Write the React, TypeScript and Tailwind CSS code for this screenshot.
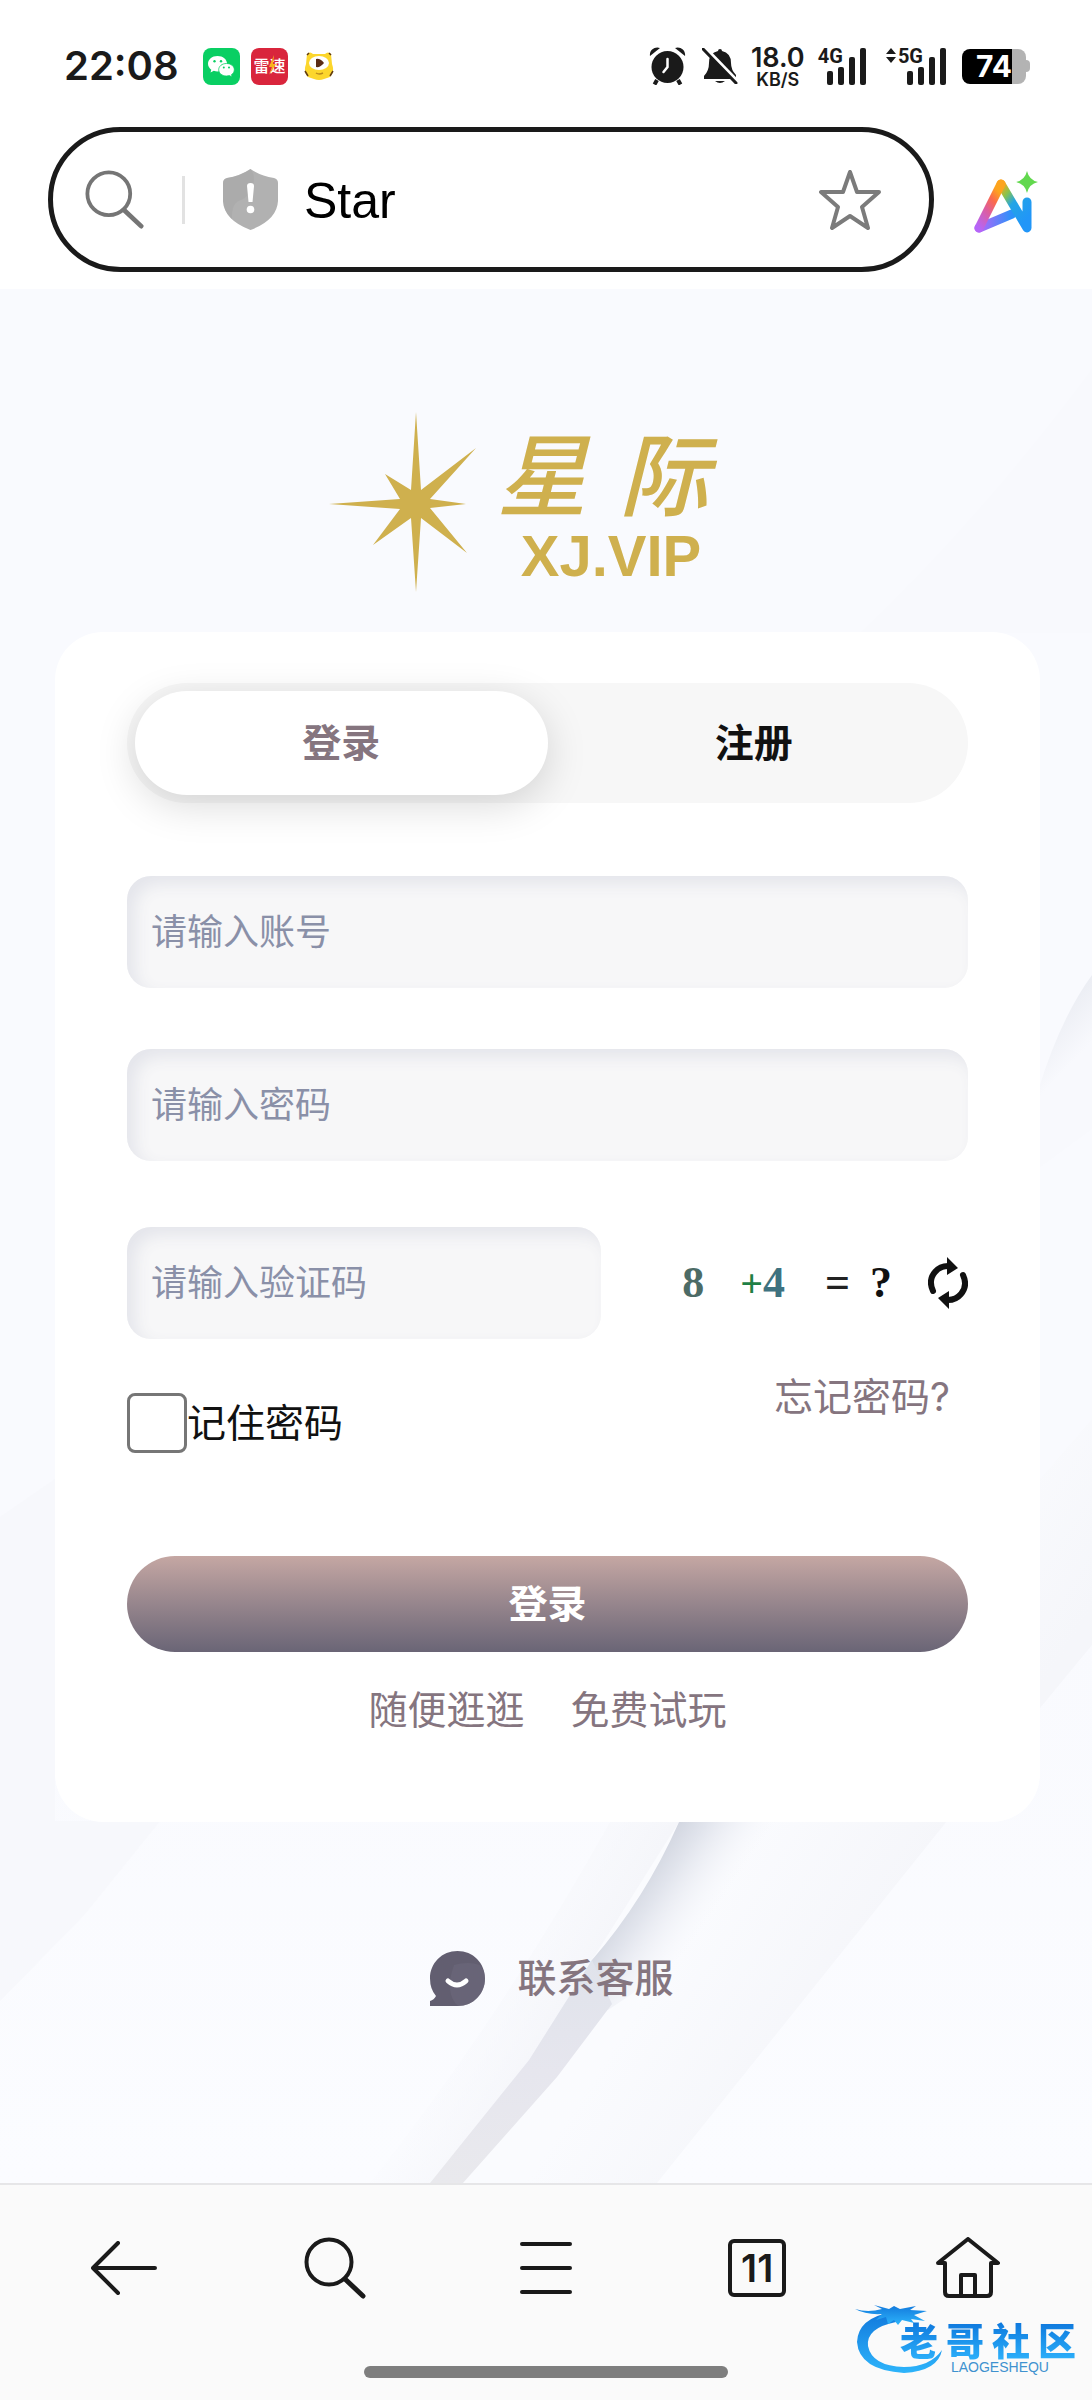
import { useState } from "react";

const GOLD = "#cfb04e";

const navItems = [
  { label: "后退", icon: <BackIcon /> },
  { label: "搜索", icon: <SearchIcon stroke="#1a1a1a" className="size-[62px]" /> },
  { label: "菜单", icon: <MenuIcon /> },
  { label: "标签页", icon: <TabsIcon count={11} /> },
  { label: "主页", icon: <HomeIcon /> },
];

const inputClass =
  "block h-28 w-full rounded-3xl bg-[#f7f7f8] px-6 text-[36px] text-[#1a1a1a] outline-none placeholder:text-[#8a90a8] shadow-[inset_8px_8px_16px_#e4e5eb]";

function SearchIcon({ stroke, className }: { stroke: string; className: string }) {
  return (
    <svg viewBox="0 0 62 62" className={className} fill="none" stroke={stroke} strokeWidth="4" strokeLinecap="round">
      <circle cx="25" cy="25" r="22.5" />
      <path d="M41 42 59 59" strokeWidth="5" />
    </svg>
  );
}

function BackIcon() {
  return (
    <svg viewBox="0 0 66 54" className="h-[54px] w-[66px]" fill="none" stroke="#1a1a1a" strokeWidth="4" strokeLinecap="round" strokeLinejoin="round">
      <path d="M27 2 2 27 27 52M2 27H64" />
    </svg>
  );
}

function MenuIcon() {
  return (
    <svg viewBox="0 0 52 52" className="size-[52px]" stroke="#1a1a1a" strokeWidth="4" strokeLinecap="round">
      <path d="M2 2H50M2 26H50M2 50H50" />
    </svg>
  );
}

function TabsIcon({ count }: { count: number }) {
  return (
    <span className="flex size-[58px] items-center justify-center rounded-md border-4 border-[#1a1a1a] text-[38px] leading-none font-semibold text-[#1a1a1a]">
      {count}
    </span>
  );
}

function HomeIcon() {
  return (
    <svg viewBox="0 0 66 62" className="h-[62px] w-[66px]" fill="none" stroke="#1a1a1a" strokeWidth="4" strokeLinejoin="round">
      <path d="M10 26H3L33 2 63 26H56V55Q56 59 52 59H14Q10 59 10 55Z" />
      <path d="M26 59V38H40V59" />
    </svg>
  );
}

function SignalBars() {
  return (
    <svg viewBox="0 0 39 37" className="-ml-4 h-[37px] w-[39px]" fill="#1a1a1a">
      <rect x="0" y="23" width="6" height="14" rx="2" />
      <rect x="11" y="19" width="6" height="18" rx="2" />
      <rect x="22" y="9" width="6" height="28" rx="2" />
      <rect x="33" y="0" width="6" height="37" rx="2" />
    </svg>
  );
}

function StatusBar() {
  return (
    <div className="flex h-[132px] items-center justify-between pr-[62px] pl-16 text-[#1a1a1a]">
      <div className="flex items-center">
        <span className="w-[139px] text-[40px] leading-none font-semibold">22:08</span>
        <svg viewBox="0 0 37 37" className="mr-[11px] size-[37px]">
          <rect width="37" height="37" rx="8" fill="#09cf63" />
          <path d="M14.500 8C9 8 5 11.500 5 15.800c0 2.500 1.300 4.500 3.300 5.900L7.500 24.500l3.300-1.700c1.200.4 2.400.6 3.700.6 5.500 0 9.500-3.300 9.500-7.700S20 8 14.500 8Z" fill="#fff" />
          <path d="M23.500 15.500c-4.600 0-7.800 2.800-7.800 6.200s3.200 6.300 7.800 6.300c1 0 2-.2 2.900-.4l2.700 1.400-.6-2.400c1.800-1.200 2.800-2.900 2.800-4.900 0-3.400-3.200-6.200-7.800-6.200Z" fill="#fff" stroke="#09cf63" strokeWidth=".8" />
          <g fill="#09cf63">
            <circle cx="11.500" cy="13.300" r="1.200" />
            <circle cx="18" cy="13.300" r="1.200" />
            <circle cx="20.800" cy="19.500" r="1" />
            <circle cx="26" cy="19.500" r="1" />
          </g>
        </svg>
        <div className="relative mr-4 flex size-[37px] items-center justify-center rounded-lg bg-[#d9253c] text-[16px] leading-none font-medium text-white">
          雷速
          <svg viewBox="0 0 37 37" className="absolute inset-0 size-[37px]">
            <path d="M23 7 18 19h3l-3 8 7-11h-3l1-9Z" fill="#f9b21c" />
          </svg>
        </div>
        <svg viewBox="0 0 30 28" className="h-7 w-[30px]">
          <path d="M3 2Q6-1 9 2H21Q24-1 27 2L28 12Q31 20 26 25L20 27Q15 29 10 27L4 25Q-1 20 2 12Z" fill="#fcd62c" />
          <path d="M1 19 4 24M29 19 26 24M3 3 5 1M27 3 25 1" stroke="#5f3a12" strokeWidth="1.500" />
          <ellipse cx="15" cy="11" rx="10" ry="7" fill="#fff" />
          <path d="M12 7Q16 6 20 11 16 16 12 15Z" fill="#5b2c16" />
          <path d="M12 21Q15 23 19 21" stroke="#b98a1c" strokeWidth="1.500" fill="none" />
        </svg>
      </div>

      <div className="flex items-center">
        <svg viewBox="0 0 37 38" className="mr-4 h-[38px] w-[37px]" fill="#1a1a1a">
          <path d="M1 9C0 3 6-1 11 1ZM36 9C37 3 31-1 26 1Z" />
          <circle cx="18.500" cy="20" r="16" />
          <path d="M8 33 5.500 37.500M29 33 31.500 37.500" stroke="#1a1a1a" strokeWidth="4" />
          <path d="M18.500 12V20L14.500 25" fill="none" stroke="#fff" strokeWidth="2.500" strokeLinecap="round" />
        </svg>
        <svg viewBox="0 0 36 36" className="mr-3 size-9" fill="#1a1a1a">
          <path d="M18 1q2 0 2 2 9 2 9 12 0 7 5 12v4H2v-3q5-5 5-13Q7 5 16 3q0-2 2-2ZM13 33H23Q18 37 13 33Z" />
          <path d="M3 0 36 34" stroke="#fff" strokeWidth="4" />
          <path d="M1 1 34 35" stroke="#1a1a1a" strokeWidth="3" strokeLinecap="round" />
        </svg>
        <div className="mr-3 flex w-14 flex-col items-center font-semibold">
          <span className="text-[27px] leading-[27px]">18.0</span>
          <span className="text-[18px] leading-[18px]">KB/S</span>
        </div>
        <div className="mr-5 flex items-start">
          <span className="font-[Roboto] text-[20px] leading-4 font-bold">4G</span>
          <SignalBars />
        </div>
        <div className="mr-4 flex items-start">
          <svg viewBox="0 0 10 15" className="mr-0.5 h-[15px] w-[10px]" fill="#1a1a1a">
            <path d="M5 0 10 6H0ZM5 15 0 9H10Z" />
          </svg>
          <span className="font-[Roboto] text-[20px] leading-4 font-bold">5G</span>
          <SignalBars />
        </div>
        <div className="flex items-center">
          <div className="flex h-[35px] w-16 items-center justify-end rounded-lg bg-linear-to-r from-black from-78% to-[#b3b3b3] to-78% pr-[14px] text-[30px] leading-none font-bold text-white">
            74
          </div>
          <span className="h-3 w-1 rounded-r-full bg-[#b3b3b3]" />
        </div>
      </div>
    </div>
  );
}

function AddressBar() {
  return (
    <div className="flex items-center pr-[54px] pl-12">
      <div className="mt-[-5px] flex h-[145px] min-w-0 flex-1 items-center rounded-full border-5 border-[#1a1a1a] pr-12 pl-8">
        <SearchIcon stroke="#757575" className="size-[59px] shrink-0" />
        <span className="mr-[38px] ml-[38px] h-12 w-[3px] shrink-0 bg-[#e2e2e2]" />
        <svg viewBox="0 0 55 61" className="h-[61px] w-[55px] shrink-0">
          <path d="M27.500 0Q38 7 51 9 55 10 55 14V32Q54 51 27.500 61 1 51 0 32V14Q0 10 4 9 17 7 27.500 0Z" fill="#b1b1b1" />
          <path d="M27.500 0Q17 7 4 9 0 10 0 14V32Q1 43 9 50 8 34 18 31 27 27 30 16 33 6 27.500 0Z" fill="#a6a6a6" opacity=".5" />
          <path d="M24 17Q24 14 27.500 14 31 14 31 17L29.500 33H25.500Z" fill="#fff" />
          <circle cx="27.500" cy="40.500" r="3.800" fill="#fff" />
        </svg>
        <input
          aria-label="地址"
          defaultValue="Star"
          className="mr-6 ml-[26px] min-w-0 flex-1 bg-transparent pt-1 font-['Liberation_Sans',sans-serif] text-[50px] text-black outline-none"
        />
        <button aria-label="收藏" className="shrink-0">
          <svg viewBox="0 0 62 60" className="h-[60px] w-[62px]" fill="none" stroke="#7b7b7b" strokeWidth="4" strokeLinejoin="round">
            <path d="M31 2 38 22H60L43 37 49 58 31 46 13 58 19 37 2 22H24Z" />
          </svg>
        </button>
      </div>
      <button aria-label="AI" className="ml-10 shrink-0">
        <svg viewBox="0 0 64 62" className="h-[62px] w-16" fill="none" strokeLinecap="round" strokeLinejoin="round">
          <defs>
            <linearGradient id="ai-left" x1="0" y1="1" x2=".6" y2="0">
              <stop stopColor="#b565f8" />
              <stop offset=".45" stopColor="#dc5da0" />
              <stop offset=".75" stopColor="#fb6a4c" />
              <stop offset="1" stopColor="#fda41d" />
            </linearGradient>
            <linearGradient id="ai-right" x1="0" y1="0" x2=".7" y2="1">
              <stop stopColor="#fda41d" />
              <stop offset=".25" stopColor="#8bc34a" />
              <stop offset=".5" stopColor="#23a5e5" />
              <stop offset="1" stopColor="#2196f8" />
            </linearGradient>
            <linearGradient id="ai-base" x1="0" y1="0" x2="1" y2="0">
              <stop stopColor="#b565f8" />
              <stop offset="1" stopColor="#2a92fa" />
            </linearGradient>
          </defs>
          <path d="M5 57 38 43" stroke="url(#ai-base)" strokeWidth="9" />
          <path d="M27 13 53 57V31" stroke="url(#ai-right)" strokeWidth="9" />
          <path d="M5 57 27 13" stroke="url(#ai-left)" strokeWidth="9" />
          <path d="M53 0Q55 9 64 11 55 13 53 22 51 13 42 11 51 9 53 0Z" fill="#62d84e" />
        </svg>
      </button>
    </div>
  );
}

// Soft paper folds behind the login card
function Backdrop() {
  return (
    <svg viewBox="0 0 1092 1894" preserveAspectRatio="none" className="absolute inset-0 size-full">
      <defs>
        <linearGradient id="page" x1="0" y1="0" x2="0" y2="1">
          <stop stopColor="#f9fafe" />
          <stop offset=".7" stopColor="#f9fafe" />
          <stop offset="1" stopColor="#fbfcff" />
        </linearGradient>
        <linearGradient id="crease" gradientUnits="userSpaceOnUse" x1="640" y1="1590" x2="705" y2="1635">
          <stop stopColor="#d3d7e1" />
          <stop offset=".3" stopColor="#e2e5ed" />
          <stop offset="1" stopColor="#f4f5fa" stopOpacity="0" />
        </linearGradient>
        <linearGradient id="band" x1="0" y1="0" x2="0" y2="1">
          <stop stopColor="#e0e3eb" />
          <stop offset=".5" stopColor="#e6e6ee" />
          <stop offset="1" stopColor="#e9e9ed" />
        </linearGradient>
        <linearGradient id="band-left" gradientUnits="userSpaceOnUse" x1="470" y1="1690" x2="560" y2="1740">
          <stop stopColor="#f6f7fb" stopOpacity="0" />
          <stop offset="1" stopColor="#f5f6fa" />
        </linearGradient>
        <linearGradient id="band-right" gradientUnits="userSpaceOnUse" x1="650" y1="1700" x2="790" y2="1790">
          <stop stopColor="#fafbfe" />
          <stop offset="1" stopColor="#f5f6fa" />
        </linearGradient>
        <linearGradient id="side-fold" gradientUnits="userSpaceOnUse" x1="1048" y1="735" x2="1080" y2="765">
          <stop stopColor="#eceef4" />
          <stop offset="1" stopColor="#f8f9fd" />
        </linearGradient>
      </defs>
      <rect width="1092" height="1894" fill="url(#page)" />
      <path d="M1092 80Q980 230 860 344H1092Z" fill="#f8f9fd" />
      <path d="M1092 686Q1060 730 1038 802V880L1092 840Z" fill="url(#side-fold)" />
      <path d="M0 1228 55 1190V1532H160L85 1625 0 1712Z" fill="#f7f8fc" />
      <path d="M610 1533H679Q645 1610 592 1671L529 1771 430 1894H370Q500 1730 610 1533Z" fill="url(#band-left)" />
      <path d="M1092 1130V1356L947 1532 657 1894H463L592 1671 679 1533 1040 1190Z" fill="url(#band-right)" />
      <path d="M679 1533Q645 1610 592 1671L575 1700 608 1721Q720 1650 800 1533Z" fill="url(#crease)" />
      <path d="M592 1671 529 1771 430 1894H463L557 1788 612 1715Z" fill="url(#band)" />
    </svg>
  );
}

function Logo() {
  return (
    <div className="flex items-center justify-center pt-[123px] pr-[54px]">
      <svg viewBox="0 0 147 180" className="mr-[21px] h-[180px] w-[147px]" fill={GOLD}>
        <path d="M87 0 92 78 147 36 101 87 137 92 101 96 138 141 92 106 87 180 82 106 44 133 71 97 0 92 71 87 56 62 82 78Z" />
      </svg>
      <div className="flex flex-col items-center" style={{ color: GOLD }}>
        <div className="flex gap-8 text-[90px] leading-[108px] font-medium italic">
          <span>星</span>
          <span>际</span>
        </div>
        <div className="pl-4 font-['Liberation_Sans',sans-serif] text-[58px] leading-[50px] font-bold">XJ.VIP</div>
      </div>
    </div>
  );
}

function Captcha() {
  return (
    <div className="flex items-center gap-9">
      <div className="flex items-baseline font-['Liberation_Serif',serif] text-[44px] leading-none font-bold">
        <span className="mr-9 text-[#4c6b66]">8</span>
        <span className="text-[40px] text-[#1f8045]">+</span>
        <span className="mr-10 text-[#3f7280]">4</span>
        <span className="mr-5 text-[#222]">=</span>
        <span className="text-[#111]">?</span>
      </div>
      <button type="button" aria-label="刷新验证码">
        <svg viewBox="0 0 40 52" className="h-[52px] w-10" fill="none" stroke="#111" strokeWidth="6" strokeLinecap="round">
          <path d="M5 34Q0 23 7 15 12 9 20 9" />
          <path d="M35 18Q40 29 33 37 28 43 20 43" />
          <path d="M19 0 30 11 19 18ZM21 52 10 41 21 34Z" fill="#111" stroke="none" />
        </svg>
      </button>
    </div>
  );
}

function LoginCard() {
  const [tab, setTab] = useState("login");

  const tabClass = (name: string) =>
    tab === name
      ? "flex-1 rounded-full bg-white text-[#85757f] shadow-[0_10px_40px_rgba(0,0,0,0.15)]"
      : "flex-1 rounded-full text-[#111]";

  return (
    <form
      onSubmit={e => e.preventDefault()}
      className="mt-10 mr-[52px] ml-[55px] rounded-[48px] bg-white px-[72px] pt-[51px] pb-[84px]"
    >
      <div className="flex h-[120px] rounded-full bg-[#f7f7f7] p-2 text-[39px] font-bold">
        <button type="button" className={tabClass("login")} onClick={() => setTab("login")}>
          登录
        </button>
        <button type="button" className={tabClass("register")} onClick={() => setTab("register")}>
          注册
        </button>
      </div>

      <div className="mt-[73px] flex flex-col gap-[61px]">
        <input type="text" aria-label="账号" placeholder="请输入账号" className={inputClass} />
        <input type="password" aria-label="密码" placeholder="请输入密码" className={inputClass} />
      </div>

      <div className="mt-[66px] flex items-center justify-between">
        <div className="w-[474px]">
          <input type="text" aria-label="验证码" placeholder="请输入验证码" className={inputClass} />
        </div>
        <Captcha />
      </div>

      <div className="mt-[30px] flex items-start justify-between text-[39px] leading-[56px]">
        <label className="mt-6 flex items-center text-[#111]">
          <input type="checkbox" className="size-[60px] appearance-none rounded-lg border-3 border-[#767676] bg-white checked:bg-[#85757f]" />
          记住密码
        </label>
        <a href="#forgot" className="mr-[18px] text-[#85757f]">
          忘记密码?
        </a>
      </div>

      <button
        type="submit"
        className="mt-[103px] block h-24 w-full rounded-full bg-linear-to-b from-[#c5a7a3] to-[#6a6576] text-[39px] font-bold text-white"
      >
        登录
      </button>

      <div className="mt-[30px] flex justify-center gap-[46px] text-[39px] leading-[56px] text-[#85757f]">
        <a href="#browse">随便逛逛</a>
        <a href="#trial">免费试玩</a>
      </div>
    </form>
  );
}

function ContactLink() {
  return (
    <a href="#service" className="mt-32 mb-44 ml-3 flex items-center justify-center gap-8 text-[39px] leading-[56px] font-medium text-[#85757f]">
      <svg viewBox="0 0 55 55" className="size-[55px]">
        <path d="M27.500 0C43 0 55 12 55 27.500S43 55 28 55H0V50Q4 49 6 45 0 38 0 27.500C0 12 12 0 27.500 0Z" fill="#625e70" />
        <path d="M55 27.500C55 43 43 55 28 55Q14 42 24 14Q38 10 50 14 55 20 55 27.500Z" fill="#6d697c" opacity=".6" />
        <path d="M18 30Q27 38 36 30" fill="none" stroke="#fff" strokeWidth="5" strokeLinecap="round" />
      </svg>
      联系客服
    </a>
  );
}

function Watermark() {
  return (
    <div className="absolute right-4 bottom-[26px] flex w-[222px] justify-end">
      <svg viewBox="0 0 90 70" className="absolute top-[-18px] left-0 h-[70px] w-[90px]">
        <defs>
          <linearGradient id="dragon" x1="0" y1="0" x2="0" y2="1">
            <stop stopColor="#1279dc" />
            <stop offset="1" stopColor="#2db4fb" />
          </linearGradient>
        </defs>
        <g fill="url(#dragon)">
          <path d="M38 8Q4 14 3 38 5 66 50 69 84 67 88 46 76 63 50 63 18 62 14 42 12 24 42 18Z" />
          <path d="M1 5Q14 9 28 5L20 1 35 5 40 2 46 5 62 2 56 6 73 7 60 11 71 17 57 15 60 19 48 16 44 21 40 16 34 20 32 13 22 16 28 10Q12 11 1 5Z" />
        </g>
      </svg>
      <div className="relative flex flex-col items-center">
        <div className="flex gap-2 bg-linear-to-b from-[#0f78dd] to-[#2db0fa] bg-clip-text text-[38px] leading-[38px] font-black text-transparent">
          <span>老</span>
          <span>哥</span>
          <span>社</span>
          <span>区</span>
        </div>
        <span className="pl-6 font-['Liberation_Sans',sans-serif] text-[14px] leading-[14px] text-[#3f92cf]">LAOGESHEQU</span>
      </div>
    </div>
  );
}

export default function App() {
  return (
    <div className="flex min-h-screen flex-col bg-white font-[Inter,'Noto_Sans_CJK_SC',sans-serif]">
      <header className="pb-[17px]">
        <StatusBar />
        <AddressBar />
      </header>

      <main className="relative flex-1">
        <Backdrop />
        <div className="relative">
          <Logo />
          <LoginCard />
          <ContactLink />
        </div>
      </main>

      <footer className="relative border-t-2 border-[#e6e6e8] bg-[#fafafa] pt-[50px] pb-[22px]">
        <nav className="grid grid-cols-5 px-[18px]">
          {navItems.map(item => (
            <button key={item.label} aria-label={item.label} className="flex h-[66px] items-center justify-center">
              {item.icon}
            </button>
          ))}
        </nav>
        <div className="mx-auto mt-[65px] h-3 w-1/3 rounded-full bg-[#7e7e7e]" />
        <Watermark />
      </footer>
    </div>
  );
}
